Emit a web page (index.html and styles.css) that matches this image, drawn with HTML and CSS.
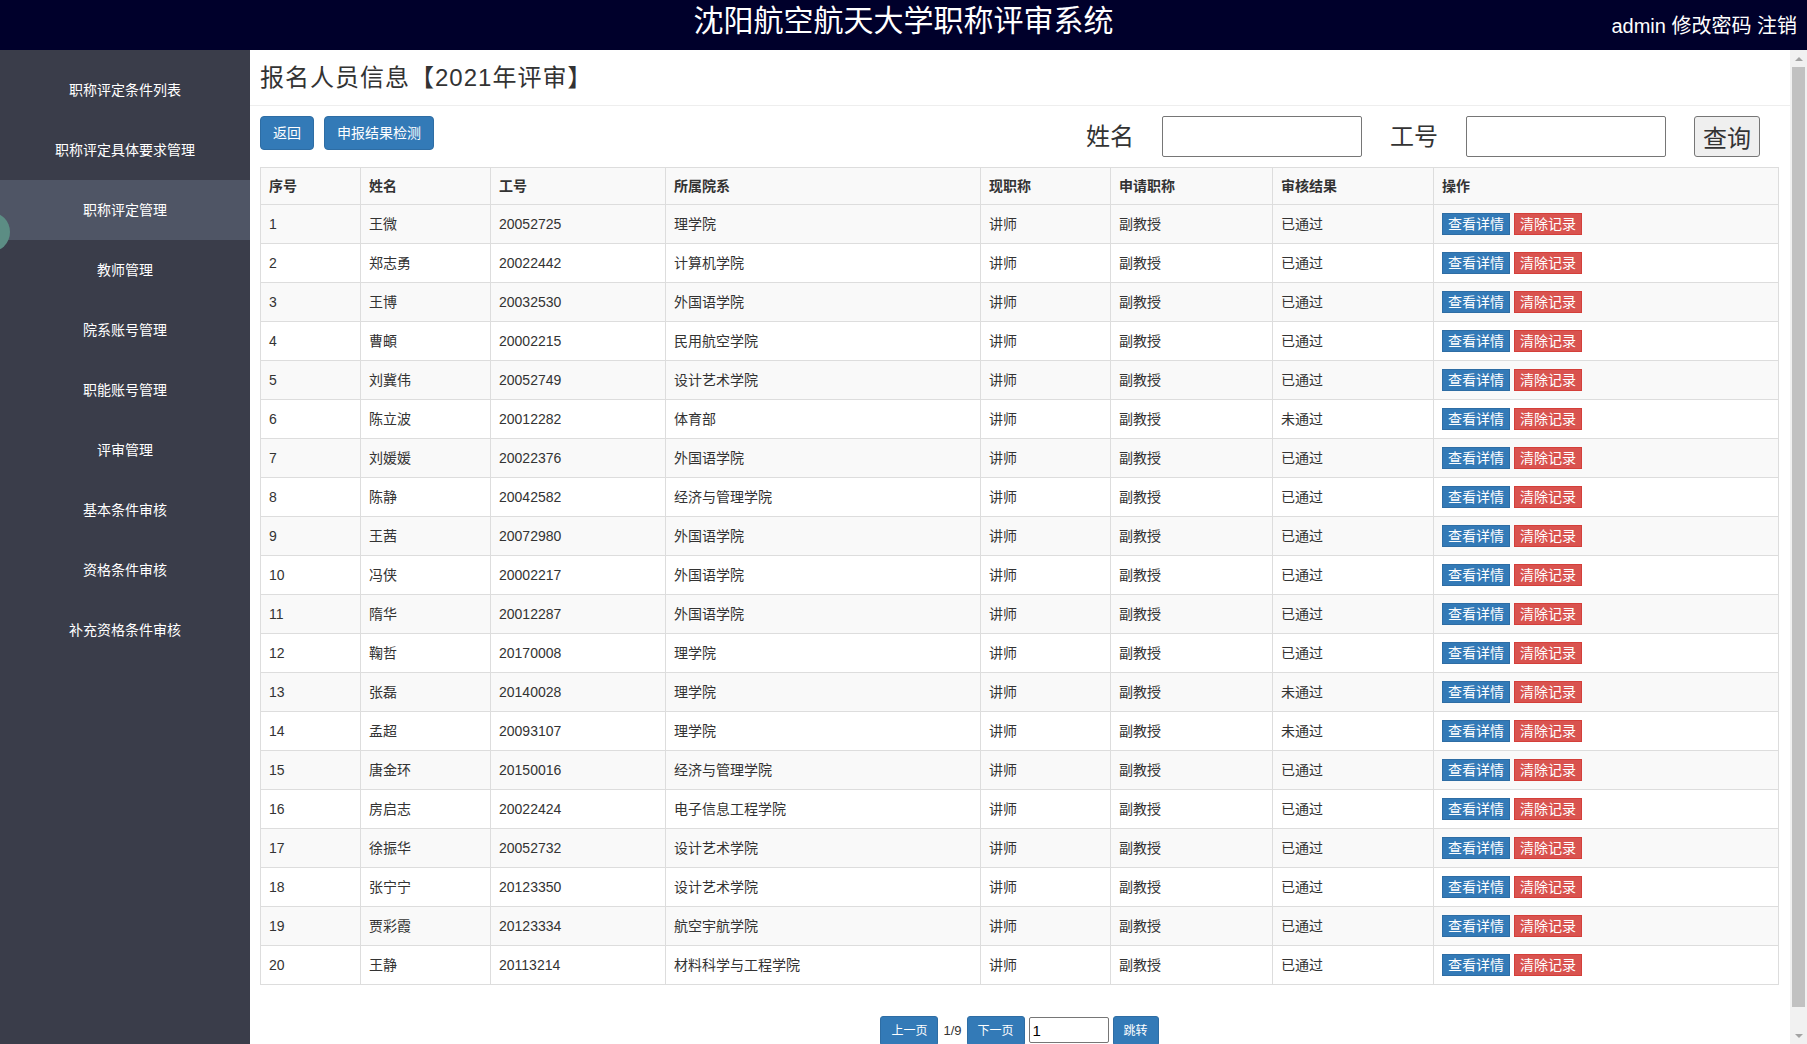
FILE: index.html
```html
<!DOCTYPE html>
<html lang="zh-CN">
<head>
<meta charset="utf-8">
<title>沈阳航空航天大学职称评审系统</title>
<link rel="stylesheet" href="styles.css">
</head>
<body>
<header class="topbar">
  <div class="topbar-spacer"></div>
  <div class="topbar-title">沈阳航空航天大学职称评审系统</div>
  <div class="topbar-user"><span>admin</span> <a>修改密码</a> <a>注销</a></div>
</header>
<div class="layout">
  <nav class="sidebar">
    <a class="nav-item">职称评定条件列表</a>
    <a class="nav-item">职称评定具体要求管理</a>
    <a class="nav-item active">职称评定管理</a>
    <a class="nav-item">教师管理</a>
    <a class="nav-item">院系账号管理</a>
    <a class="nav-item">职能账号管理</a>
    <a class="nav-item">评审管理</a>
    <a class="nav-item">基本条件审核</a>
    <a class="nav-item">资格条件审核</a>
    <a class="nav-item">补充资格条件审核</a>
    <div class="float-ball"></div>
  </nav>
  <main class="main">
    <h3 class="page-title">报名人员信息【2021年评审】</h3>
    <div class="page-body">
      <div class="toolbar">
        <button class="btn btn-primary">返回</button>
        <button class="btn btn-primary">申报结果检测</button>
        <div class="search">
          <label class="search-label">姓名</label>
          <input class="search-input" type="text">
          <label class="search-label">工号</label>
          <input class="search-input" type="text">
          <button class="search-btn">查询</button>
        </div>
      </div>
      <table class="grid">
        <colgroup>
          <col class="c1"><col class="c2"><col class="c3"><col class="c4"><col class="c5"><col class="c6"><col class="c7"><col class="c8">
        </colgroup>
        <thead>
          <tr><th>序号</th><th>姓名</th><th>工号</th><th>所属院系</th><th>现职称</th><th>申请职称</th><th>审核结果</th><th>操作</th></tr>
        </thead>
        <tbody>
          <tr><td>1</td><td>王微</td><td>20052725</td><td>理学院</td><td>讲师</td><td>副教授</td><td>已通过</td><td class="ops"><a class="op op-view">查看详情</a> <a class="op op-del">清除记录</a></td></tr>
          <tr><td>2</td><td>郑志勇</td><td>20022442</td><td>计算机学院</td><td>讲师</td><td>副教授</td><td>已通过</td><td class="ops"><a class="op op-view">查看详情</a> <a class="op op-del">清除记录</a></td></tr>
          <tr><td>3</td><td>王博</td><td>20032530</td><td>外国语学院</td><td>讲师</td><td>副教授</td><td>已通过</td><td class="ops"><a class="op op-view">查看详情</a> <a class="op op-del">清除记录</a></td></tr>
          <tr><td>4</td><td>曹頔</td><td>20002215</td><td>民用航空学院</td><td>讲师</td><td>副教授</td><td>已通过</td><td class="ops"><a class="op op-view">查看详情</a> <a class="op op-del">清除记录</a></td></tr>
          <tr><td>5</td><td>刘冀伟</td><td>20052749</td><td>设计艺术学院</td><td>讲师</td><td>副教授</td><td>已通过</td><td class="ops"><a class="op op-view">查看详情</a> <a class="op op-del">清除记录</a></td></tr>
          <tr><td>6</td><td>陈立波</td><td>20012282</td><td>体育部</td><td>讲师</td><td>副教授</td><td>未通过</td><td class="ops"><a class="op op-view">查看详情</a> <a class="op op-del">清除记录</a></td></tr>
          <tr><td>7</td><td>刘媛媛</td><td>20022376</td><td>外国语学院</td><td>讲师</td><td>副教授</td><td>已通过</td><td class="ops"><a class="op op-view">查看详情</a> <a class="op op-del">清除记录</a></td></tr>
          <tr><td>8</td><td>陈静</td><td>20042582</td><td>经济与管理学院</td><td>讲师</td><td>副教授</td><td>已通过</td><td class="ops"><a class="op op-view">查看详情</a> <a class="op op-del">清除记录</a></td></tr>
          <tr><td>9</td><td>王茜</td><td>20072980</td><td>外国语学院</td><td>讲师</td><td>副教授</td><td>已通过</td><td class="ops"><a class="op op-view">查看详情</a> <a class="op op-del">清除记录</a></td></tr>
          <tr><td>10</td><td>冯侠</td><td>20002217</td><td>外国语学院</td><td>讲师</td><td>副教授</td><td>已通过</td><td class="ops"><a class="op op-view">查看详情</a> <a class="op op-del">清除记录</a></td></tr>
          <tr><td>11</td><td>隋华</td><td>20012287</td><td>外国语学院</td><td>讲师</td><td>副教授</td><td>已通过</td><td class="ops"><a class="op op-view">查看详情</a> <a class="op op-del">清除记录</a></td></tr>
          <tr><td>12</td><td>鞠哲</td><td>20170008</td><td>理学院</td><td>讲师</td><td>副教授</td><td>已通过</td><td class="ops"><a class="op op-view">查看详情</a> <a class="op op-del">清除记录</a></td></tr>
          <tr><td>13</td><td>张磊</td><td>20140028</td><td>理学院</td><td>讲师</td><td>副教授</td><td>未通过</td><td class="ops"><a class="op op-view">查看详情</a> <a class="op op-del">清除记录</a></td></tr>
          <tr><td>14</td><td>孟超</td><td>20093107</td><td>理学院</td><td>讲师</td><td>副教授</td><td>未通过</td><td class="ops"><a class="op op-view">查看详情</a> <a class="op op-del">清除记录</a></td></tr>
          <tr><td>15</td><td>唐金环</td><td>20150016</td><td>经济与管理学院</td><td>讲师</td><td>副教授</td><td>已通过</td><td class="ops"><a class="op op-view">查看详情</a> <a class="op op-del">清除记录</a></td></tr>
          <tr><td>16</td><td>房启志</td><td>20022424</td><td>电子信息工程学院</td><td>讲师</td><td>副教授</td><td>已通过</td><td class="ops"><a class="op op-view">查看详情</a> <a class="op op-del">清除记录</a></td></tr>
          <tr><td>17</td><td>徐振华</td><td>20052732</td><td>设计艺术学院</td><td>讲师</td><td>副教授</td><td>已通过</td><td class="ops"><a class="op op-view">查看详情</a> <a class="op op-del">清除记录</a></td></tr>
          <tr><td>18</td><td>张宁宁</td><td>20123350</td><td>设计艺术学院</td><td>讲师</td><td>副教授</td><td>已通过</td><td class="ops"><a class="op op-view">查看详情</a> <a class="op op-del">清除记录</a></td></tr>
          <tr><td>19</td><td>贾彩霞</td><td>20123334</td><td>航空宇航学院</td><td>讲师</td><td>副教授</td><td>已通过</td><td class="ops"><a class="op op-view">查看详情</a> <a class="op op-del">清除记录</a></td></tr>
          <tr><td>20</td><td>王静</td><td>20113214</td><td>材料科学与工程学院</td><td>讲师</td><td>副教授</td><td>已通过</td><td class="ops"><a class="op op-view">查看详情</a> <a class="op op-del">清除记录</a></td></tr>
        </tbody>
      </table>
      <div class="pager">
        <button class="btn btn-primary btn-sm">上一页</button>
        <span class="pager-info">1/9</span>
        <button class="btn btn-primary btn-sm">下一页</button>
        <input class="pager-input" type="text" value="1">
        <button class="btn btn-primary btn-sm">跳转</button>
      </div>
    </div>
  </main>
  <div class="scrollbar">
    <div class="sb-btn"><span class="arrow-up"></span></div>
    <div class="sb-track"><div class="sb-thumb"></div></div>
    <div class="sb-btn"><span class="arrow-down"></span></div>
  </div>
</div>
</body>
</html>
```

FILE: styles.css
```css
* { box-sizing: border-box; }
html, body { margin: 0; padding: 0; height: 100%; }
body {
  font-family: "Liberation Sans", "Noto Sans CJK SC", sans-serif;
  font-size: 14px;
  line-height: 20px;
  color: #333;
  background: #fff;
  display: flex;
  flex-direction: column;
  overflow: hidden;
}

.topbar {
  flex: 0 0 50px;
  height: 50px;
  background: #00002b;
  color: #fff;
  display: grid;
  grid-template-columns: 1fr auto 1fr;
  align-items: start;
}
.topbar-title {
  font-size: 30px;
  line-height: 42px;
}
.topbar-user {
  justify-self: end;
  font-size: 20px;
  line-height: 20px;
  padding-top: 16px;
  padding-right: 10px;
}
.topbar-user a { color: #fff; }

.layout {
  flex: 1;
  display: flex;
  min-height: 0;
}

.sidebar {
  position: relative;
  flex: 0 0 250px;
  background: #3a3d4a;
  padding-top: 10px;
  display: flex;
  flex-direction: column;
}
.nav-item {
  height: 60px;
  display: flex;
  align-items: center;
  justify-content: center;
  color: #fff;
  font-size: 14px;
}
.nav-item.active { background: #4f5565; }
.float-ball {
  position: absolute;
  left: -30px;
  top: 162px;
  width: 40px;
  height: 40px;
  border-radius: 50%;
  background: #5c8d84;
}

.main {
  flex: 1;
  min-width: 0;
  overflow: hidden;
  background: #fff;
}
.page-title {
  margin: 0;
  padding: 15px 10px 14px;
  font-size: 24px;
  line-height: 26px;
  letter-spacing: 1px;
  font-weight: normal;
  color: #333;
  border-bottom: 1px solid #eee;
}
.page-body {
  padding: 0 11px 0 10px;
}

.toolbar {
  margin-top: 10px;
  display: flex;
  align-items: flex-start;
}
.btn {
  font-family: inherit;
  display: inline-block;
  font-size: 14px;
  line-height: 20px;
  padding: 6px 12px;
  border: 1px solid transparent;
  border-radius: 4px;
  cursor: pointer;
}
.btn-primary {
  color: #fff;
  background: #337ab7;
  border-color: #2e6da4;
}
.toolbar .btn { margin-right: 10px; }
.btn-sm {
  font-size: 12px;
  line-height: 18px;
  padding: 5px 10px;
  border-radius: 3px;
}

.search {
  margin-left: auto;
  margin-right: 19px;
  display: flex;
  align-items: center;
  gap: 28px;
}
.search-label {
  font-size: 24px;
  line-height: 30px;
  color: #333;
}
.search-input {
  width: 200px;
  height: 41px;
  border: 1px solid #767676;
  border-radius: 2px;
  padding: 0 4px;
  font-size: 16px;
  font-family: inherit;
}
.search-btn {
  height: 41px;
  padding: 0 8px;
  font-size: 24px;
  font-family: inherit;
  background: #efefef;
  border: 1px solid #767676;
  border-radius: 3px;
  color: #333;
}

.grid {
  margin-top: 10px;
  width: 100%;
  table-layout: fixed;
  border-collapse: collapse;
  border: 1px solid #ddd;
}
.c1 { width: 100px; }
.c2 { width: 130px; }
.c3 { width: 175px; }
.c4 { width: 315px; }
.c5 { width: 130px; }
.c6 { width: 162px; }
.c7 { width: 161px; }
.grid th, .grid td {
  border: 1px solid #ddd;
  padding: 8px;
  text-align: left;
  vertical-align: middle;
  line-height: 20px;
  white-space: nowrap;
  overflow: hidden;
}
.grid th {
  font-weight: bold;
  background: #f9f9f9;
}
.grid tbody tr:nth-child(odd) { background: #f9f9f9; }
.grid td.ops { line-height: 22px; }

.op {
  display: inline-block;
  height: 22px;
  line-height: 20px;
  padding: 0 5px;
  border: 1px solid transparent;
  color: #fff;
  font-size: 14px;
  vertical-align: top;
}
.op-view { background: #337ab7; border-color: #2e6da4; }
.op-del { background: #d9534f; border-color: #d43f3a; }

.pager {
  margin-top: 31px;
  display: flex;
  justify-content: center;
  align-items: flex-start;
  gap: 4px;
  padding-bottom: 16px;
}
.pager-info {
  font-size: 13px;
  line-height: 30px;
  margin: 0 1px;
}
.pager-input {
  width: 80px;
  height: 26px;
  margin-top: 1px;
  border: 1px solid #767676;
  border-radius: 2px;
  padding: 0 3px;
  font-size: 15px;
  font-family: inherit;
  color: #000;
}

.scrollbar {
  flex: 0 0 17px;
  background: #f1f1f1;
  display: flex;
  flex-direction: column;
}
.sb-btn {
  height: 17px;
  flex: 0 0 17px;
  display: flex;
  align-items: center;
  justify-content: center;
}
.arrow-up {
  width: 0; height: 0;
  border-left: 4px solid transparent;
  border-right: 4px solid transparent;
  border-bottom: 4px solid #a3a3a3;
}
.arrow-down {
  width: 0; height: 0;
  border-left: 4px solid transparent;
  border-right: 4px solid transparent;
  border-top: 4px solid #a3a3a3;
}
.sb-track {
  flex: 1;
  display: flex;
  flex-direction: column;
  padding-bottom: 20px;
}
.sb-thumb {
  flex: 1;
  margin: 0 2px;
  background: #c1c1c1;
}
```
